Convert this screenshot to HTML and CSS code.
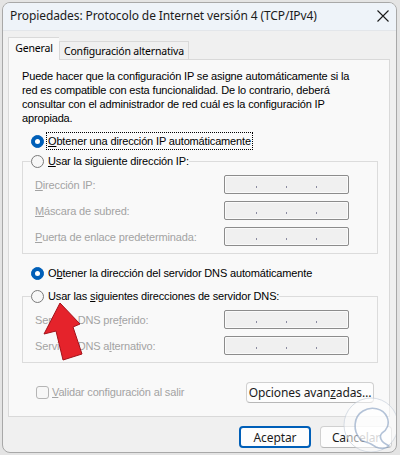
FILE: index.html
```html
<!DOCTYPE html>
<html lang="es">
<head>
<meta charset="utf-8">
<title>Propiedades</title>
<link rel="stylesheet" href="styles.css">
</head>
<body>
<div class="window">
  <div class="titlebar">
    <span class="title">Propiedades: Protocolo de Internet versión 4 (TCP/IPv4)</span>
    <span class="close"><svg width="12" height="12" viewBox="0 0 12 12"><path d="M0.5 0.5 L11.5 11.5 M11.5 0.5 L0.5 11.5" stroke="#1a1a1a" stroke-width="1.1" fill="none"/></svg></span>
  </div>
  <div class="content">
    <div class="tabs">
      <div class="tab active">General</div>
      <div class="tab">Configuración alternativa</div>
    </div>
    <div class="panel">
      <p class="intro">Puede hacer que la configuración IP se asigne automáticamente si la<br>red es compatible con esta funcionalidad. De lo contrario, deberá<br>consultar con el administrador de red cuál es la configuración IP<br>apropiada.</p>

      <div class="radio-row first"><span class="radio on"></span><span class="focus"><u>O</u>btener una dirección IP automáticamente</span></div>

      <fieldset class="group g1">
        <legend><span class="radio"></span><span class="rtext"><u>U</u>sar la siguiente dirección IP:</span></legend>
        <div class="field"><span class="lbl"><u>D</u>irección IP:</span><span class="ip"><i></i><i></i><i></i></span></div>
        <div class="field"><span class="lbl"><u>M</u>áscara de subred:</span><span class="ip"><i></i><i></i><i></i></span></div>
        <div class="field"><span class="lbl"><u>P</u>uerta de enlace predeterminada:</span><span class="ip"><i></i><i></i><i></i></span></div>
      </fieldset>

      <div class="radio-row dns"><span class="radio on"></span><span class="rtext">O<u>b</u>tener la dirección del servidor DNS automáticamente</span></div>

      <fieldset class="group g2">
        <legend><span class="radio"></span><span class="rtext">Usar las <u>s</u>iguientes direcciones de servidor DNS:</span></legend>
        <div class="field"><span class="lbl">Servidor DNS pre<u>f</u>erido:</span><span class="ip"><i></i><i></i><i></i></span></div>
        <div class="field"><span class="lbl">Servidor DNS a<u>l</u>ternativo:</span><span class="ip"><i></i><i></i><i></i></span></div>
      </fieldset>

      <div class="bottom-row">
        <span class="check"><span class="box"></span><span class="ctext"><u>V</u>alidar configuración al salir</span></span>
        <button class="btn adv">Opciones avan<u>z</u>adas…</button>
      </div>
    </div>
    <div class="actions">
      <button class="btn primary">Aceptar</button>
      <button class="btn">Cancelar</button>
    </div>
  </div>

  <svg class="watermark" width="60" height="62" viewBox="0 0 60 62">
    <circle cx="28" cy="28" r="27" fill="rgba(255,255,255,0.55)" stroke="rgba(200,208,220,0.7)" stroke-width="1"/>
    <path d="M17 42 C10 34 10 20 20 14 C28 9 40 11 44 20 C47 27 44 33 39 36 C37 38 37 41 39 44 C41 47 44 47 46 49 C43 52 37 52 33 50 L28 47 C24 45 20 45 17 42 Z" fill="rgba(255,255,255,0.6)" stroke="rgba(90,125,170,0.45)" stroke-width="1.6"/>
  </svg>

  <svg class="arrow" width="50" height="70" viewBox="0 0 50 70">
    <polygon points="18,1 38,22 31,25 40,52 21,58 14,29 2,32" fill="#e5232b" stroke="#a3121a" stroke-width="1" stroke-linejoin="round"/>
  </svg>
</div>
</body>
</html>
```

FILE: styles.css
```css
* { box-sizing: border-box; }

html, body {
  margin: 0;
  padding: 0;
}

body {
  width: 400px;
  height: 455px;
  background: #e4e4e4;
  overflow: hidden;
  padding: 2px 3px 0 2px;
}

.window {
  position: relative;
  width: 395px;
  height: 451px;
  background: #f0f0f0;
  border: 1px solid #a8a8a8;
  border-radius: 8px;
  overflow: hidden;
  font-family: "Liberation Sans", Arial, sans-serif;
  font-size: 11px;
  letter-spacing: -0.15px;
  color: #000;
}

.titlebar {
  height: 28px;
  background: #eef3f9;
  border-bottom: 1px solid #e3e6ea;
  display: flex;
  align-items: center;
  justify-content: space-between;
  padding: 0 7px 0 7px;
}

.title {
  font-family: "Segoe UI", "Noto Sans", sans-serif;
  font-size: 12px;
  letter-spacing: -0.1px;
  color: #1b1b1b;
  margin-top: -2px;
}

.close {
  display: flex;
  margin-top: -2px;
}

.content {
  padding: 6px 0 0 5px;
}

.tabs {
  display: flex;
  align-items: flex-end;
  height: 22px;
  position: relative;
  z-index: 2;
}

.tab {
  font-family: "Segoe UI", "Noto Sans", sans-serif;
  font-size: 10.5px;
  letter-spacing: -0.2px;
  height: 18px;
  padding: 0 4px;
  border: 1px solid #d9d9d9;
  border-bottom: none;
  background: #f0f0f0;
  display: flex;
  align-items: center;
  color: #000;
}

.tab.active {
  width: 51px;
  height: 23px;
  background: #f9f9f9;
  justify-content: center;
  border-right: none;
  padding: 0 0 2px 0;
  margin-bottom: -1px;
}

.panel {
  width: 382px;
  height: 358px;
  background: #f9f9f9;
  border: 1px solid #d9d9d9;
  padding: 9px 0 0 0;
}

.intro {
  margin: 0 0 0 13px;
  line-height: 14px;
}

.radio-row {
  display: flex;
  align-items: center;
  height: 16px;
  padding-left: 22px;
}

.radio-row.first { margin-top: 8px; }
.radio-row.dns { margin-top: 11px; }

.radio {
  width: 13px;
  height: 13px;
  border-radius: 50%;
  border: 1px solid #7a7a7a;
  background: #f7f7f7;
  flex: none;
  margin-right: 3px;
  position: relative;
}

.radio.on {
  background: #005fb8;
  border-color: #005fb8;
}

.radio.on::after {
  content: "";
  position: absolute;
  left: 3px;
  top: 3px;
  width: 5px;
  height: 5px;
  border-radius: 50%;
  background: #fff;
}

.focus {
  outline: 1px dotted #000;
  padding: 1px;
  line-height: 14px;
}

.rtext { padding-left: 1px; }

.group {
  margin: 4px 0 0 13px;
  width: 356px;
  border: 1px solid #dcdcdc;
  padding: 6px 0 7px 0;
}

.g1 { margin-top: 4px; }
.g2 { margin-top: 7px; }

.group legend {
  display: flex;
  align-items: center;
  height: 16px;
  padding: 0;
  margin-left: 8px;
}

.field {
  display: flex;
  align-items: center;
  height: 19px;
  padding-left: 12px;
  margin-bottom: 7px;
}

.field:last-child { margin-bottom: 0; }

.lbl {
  width: 189px;
  color: #a3a3a3;
}

.ip {
  width: 125px;
  height: 19px;
  background: #f0f0f0;
  border: 1px solid #8c8c8c;
  border-radius: 2px;
  box-shadow: inset 0 0 0 1px #fafafa;
  display: flex;
  justify-content: center;
  align-items: flex-end;
  gap: 29px;
  padding-bottom: 5px;
}

.ip i {
  display: block;
  width: 1px;
  height: 2px;
  background: #8a8aa0;
}

.bottom-row {
  display: flex;
  align-items: center;
  justify-content: space-between;
  margin-top: 19px;
  padding: 0 15px 0 27px;
  height: 20px;
}

.check {
  display: flex;
  align-items: center;
  color: #a3a3a3;
}

.box {
  width: 13px;
  height: 13px;
  border: 1px solid #b5b5b5;
  border-radius: 3px;
  background: #f7f7f7;
  margin-right: 3px;
}

.btn {
  font-family: "Segoe UI", "Noto Sans", sans-serif;
  font-size: 12px;
  letter-spacing: -0.1px;
  color: #1b1b1b;
  background: #fdfdfd;
  border: 1px solid #d0d0d0;
  border-bottom-color: #b8b8b8;
  border-radius: 4px;
  height: 21px;
  padding: 0;
  margin: 0;
}

.adv {
  width: 128px;
}

.actions {
  display: flex;
  justify-content: flex-end;
  gap: 9px;
  margin-top: 9px;
  padding-right: 4px;
}

.actions .btn {
  width: 72px;
  height: 22px;
}

.btn.primary {
  border: 2px solid #005fb8;
}

.watermark {
  position: absolute;
  left: 340px;
  top: 394px;
}

.arrow {
  position: absolute;
  left: 39px;
  top: 299px;
}
```
